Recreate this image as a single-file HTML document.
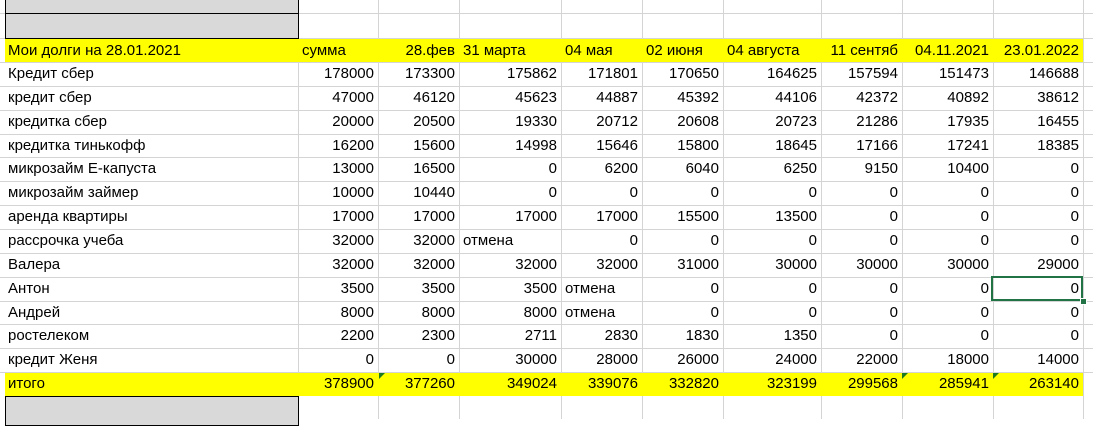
<!DOCTYPE html>
<html><head><meta charset="utf-8"><style>
body{margin:0;width:1093px;height:419px;overflow:hidden;background:#fff;font-family:"Liberation Sans",sans-serif;font-size:15px;color:#000;position:relative}
.v{position:absolute;top:0;height:419px;width:1px;background:#d4d4d4}
.h{position:absolute;left:0;width:1093px;height:1px;background:#d4d4d4}
.c{position:absolute;height:24px;line-height:24px;white-space:nowrap}
.y{position:absolute;background:#ffff00}
.g{position:absolute;background:#d9d9d9;border:1px solid #000;box-sizing:border-box}
.tri{position:absolute;width:0;height:0;border-top:6px solid #1f7a1f;border-right:6px solid transparent}
</style></head><body>
<div class="h" style="top:13px"></div><div class="h" style="top:38px"></div>
<div id="grid"></div>
<div class="y" style="left:5px;top:39px;width:1078px;height:23px"></div>
<div class="y" style="left:5px;top:373px;width:1078px;height:23px"></div>
<div class="g" style="left:5px;top:-1px;width:294px;height:15px"></div>
<div class="g" style="left:5px;top:13px;width:294px;height:26px"></div>
<div class="g" style="left:5px;top:396px;width:294px;height:30px"></div>
<div id="cells"></div>
<div style="position:absolute;left:991px;top:276px;width:92px;height:25px;border:2px solid #217346;box-sizing:border-box"></div>
<div style="position:absolute;left:1080px;top:298px;width:5px;height:5px;background:#217346;border:1px solid #fff"></div>
<div class="tri" style="left:379px;top:373px"></div>
<div class="tri" style="left:902px;top:373px"></div>
<div class="tri" style="left:993px;top:373px"></div>
<script>
var xs=[0,298,378,459,561,642,723,821,902,993,1083];
var g='';
for(var i=1;i<xs.length;i++)g+='<div class="v" style="left:'+xs[i]+'px"></div>';
for(var r=0;r<14;r++)g+='<div class="h" style="top:'+(62+r*23.85)+'px"></div>';
document.getElementById('grid').innerHTML=g;
var hdr=['Мои долги на 28.01.2021','сумма','28.фев','31 марта','04 мая','02 июня','04 августа','11 сентяб','04.11.2021','23.01.2022'];
var halign=['l','l','r','l','l','l','l','r','r','r'];
var rows=[
['Кредит сбер',178000,173300,175862,171801,170650,164625,157594,151473,146688],
['кредит сбер',47000,46120,45623,44887,45392,44106,42372,40892,38612],
['кредитка сбер',20000,20500,19330,20712,20608,20723,21286,17935,16455],
['кредитка тинькофф',16200,15600,14998,15646,15800,18645,17166,17241,18385],
['микрозайм Е-капуста',13000,16500,0,6200,6040,6250,9150,10400,0],
['микрозайм займер',10000,10440,0,0,0,0,0,0,0],
['аренда квартиры',17000,17000,17000,17000,15500,13500,0,0,0],
['рассрочка учеба',32000,32000,'*отмена',0,0,0,0,0,0],
['Валера',32000,32000,32000,32000,31000,30000,30000,30000,29000],
['Антон',3500,3500,3500,'*отмена',0,0,0,0,0],
['Андрей',8000,8000,8000,'*отмена',0,0,0,0,0],
['ростелеком',2200,2300,2711,2830,1830,1350,0,0,0],
['кредит Женя',0,0,30000,28000,26000,24000,22000,18000,14000],
['итого',378900,377260,349024,339076,332820,323199,299568,285941,263140]];
var h='';
function cell(t,c,tp,al){var L=xs[c],R=xs[c+1];
 if(al=='l')h+='<div class="c" style="left:'+(L+(c==0?8:4))+'px;top:'+tp+'px">'+t+'</div>';
 else h+='<div class="c" style="right:'+(1093-R+4)+'px;top:'+tp+'px">'+t+'</div>';}
for(var c=0;c<10;c++)cell(hdr[c],c,38.5,halign[c]);
for(var r=0;r<rows.length;r++){var tp=62+r*23.85;
 for(var c=0;c<10;c++){var v=rows[r][c];
  if(c==0)cell(v,0,tp,'l');
  else if(typeof v=='string')cell(v.slice(1),c,tp,'l');
  else cell(v,c,tp,'r');}}
document.getElementById('cells').innerHTML=h;
</script>
</body></html>
